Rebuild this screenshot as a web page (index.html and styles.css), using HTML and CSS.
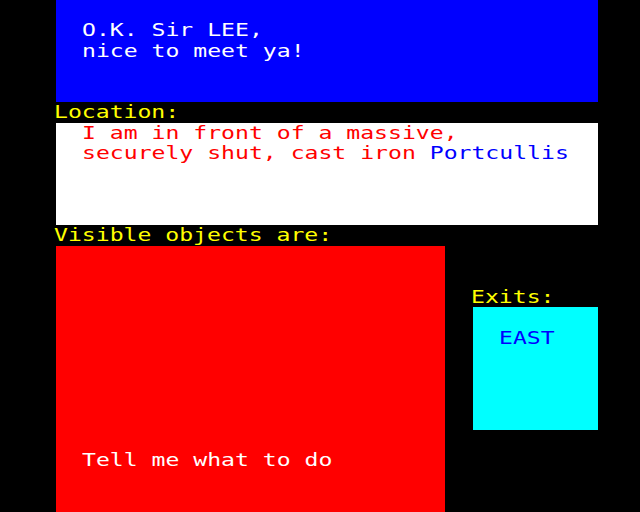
FILE: index.html
```html
<!DOCTYPE html>
<html>
<head>
<meta charset="utf-8">
<link rel="stylesheet" href="styles.css">
</head>
<body>
<div class="screen">
  <div class="panel msg">
    <div class="line white">O.K. Sir LEE,</div>
    <div class="line white">nice to meet ya!</div>
  </div>
  <div class="label label-loc">Location:</div>
  <div class="panel loc">
    <div class="line red">I am in front of a massive,</div>
    <div class="line red">securely shut, cast iron <span class="blue">Portcullis</span></div>
  </div>
  <div class="label label-vis">Visible objects are:</div>
  <div class="panel objects">
    <div class="line white">Tell me what to do</div>
  </div>
  <div class="label label-exits">Exits:</div>
  <div class="panel exits">
    <div class="line blue">EAST</div>
  </div>
</div>
</body>
</html>
```
FILE: styles.css
```css
html, body {
  margin: 0;
  padding: 0;
  background: #000;
}

.screen {
  width: 640px;
  height: 512px;
  overflow: hidden;
  background: #000;
  display: grid;
  grid-template-columns: 42px repeat(40, 13.9px) 1fr;
  grid-template-rows: repeat(25, 20.48px);
  font-family: "DejaVu Sans Mono", monospace;
  font-size: 17px;
}

.line,
.label {
  height: 20.48px;
  line-height: 21px;
  margin-left: -1.5px;
  white-space: pre;
  transform: scaleX(1.359);
  transform-origin: 0 0;
}

.panel {
  box-sizing: border-box;
  padding-left: 27.8px;
}

.msg {
  grid-row: 1 / 6;
  grid-column: 3 / 42;
  background: #0000ff;
  padding-top: 20.48px;
}

.loc {
  grid-row: 7 / 12;
  grid-column: 3 / 42;
  background: #ffffff;
}

.objects {
  grid-row: 13 / 26;
  grid-column: 3 / 31;
  background: #ff0000;
  padding-top: 204.8px;
}

.exits {
  grid-row: 16 / 22;
  grid-column: 33 / 42;
  background: #00ffff;
  padding-top: 20.48px;
}

.label {
  color: #ffff00;
}

.label-loc {
  grid-row: 6;
  grid-column: 3 / 42;
}

.label-vis {
  grid-row: 12;
  grid-column: 3 / 42;
}

.label-exits {
  grid-row: 15;
  grid-column: 33 / 42;
}

.white { color: #ffffff; }
.red { color: #ff0000; }
.blue { color: #0000ff; }
```
